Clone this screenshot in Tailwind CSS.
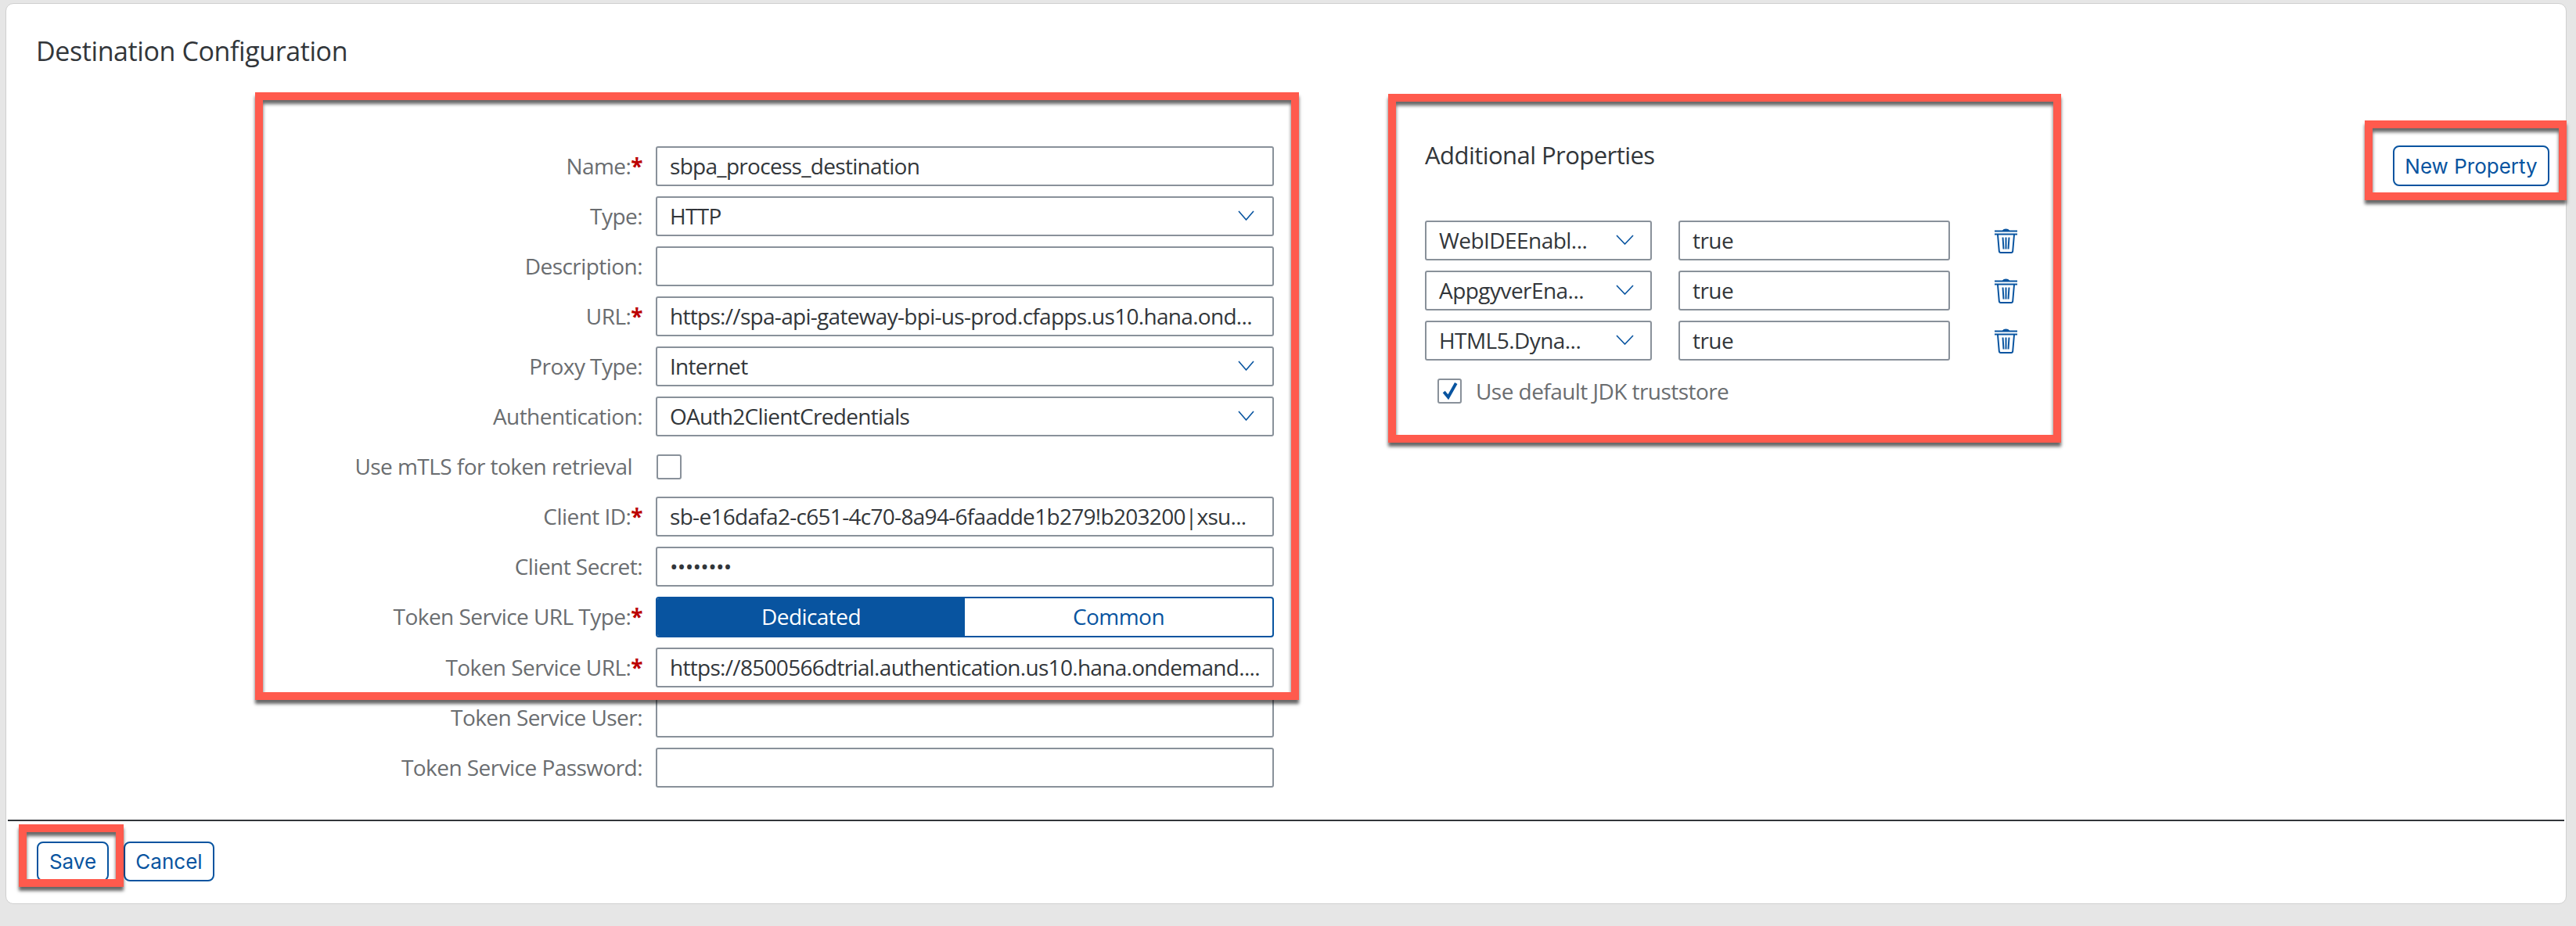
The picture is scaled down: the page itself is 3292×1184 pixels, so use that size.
<!DOCTYPE html>
<html lang="en">
  <head>
    <meta charset="UTF-8" />
    <title>Destination Configuration</title>
    <script src="https://cdn.jsdelivr.net/npm/@tailwindcss/browser@4"></script>
  </head>
  <body class="h-screen overflow-hidden bg-[#e6e6e6] pt-[4px] pl-[7px] pr-[12px] font-['Open_Sans',sans-serif] text-[28px] text-[#32363a]">
    <!-- Card -->
    <div class="relative flex h-[1152px] flex-col rounded-[10px] border border-[#d0d0d0] bg-white">
      <h1 class="h-[105px] pl-[38px] pt-[38px] text-[34px] leading-[44px] font-normal tracking-[-0.4px]">Destination Configuration</h1>

      <main class="flex flex-1 items-start">
        <!-- Form -->
        <form class="ml-[313px] grid w-[1307px] grid-cols-[500px_790px] gap-x-[17px] gap-y-[13px] pt-[77px] tracking-[-0.55px]">
          <label class="flex h-[51px] items-center justify-end pb-[2px] text-[#6a6d70]">Name:<span class="font-bold text-[#bb0000]">*</span></label>
          <input class="h-[51px] rounded-[3px] border-2 border-[#89919a] px-[16px] pb-[2px] tracking-[-0.7px] outline-none" value="sbpa_process_destination" />

          <label class="flex h-[51px] items-center justify-end pb-[2px] text-[#6a6d70]">Type:</label>
          <div class="flex h-[51px] items-center justify-between rounded-[3px] border-2 border-[#89919a] pb-[2px] pl-[16px] pr-[23px] tracking-[-0.7px]">
            HTTP
            <svg class="h-[13px] w-[21px]" viewBox="0 0 21 13" fill="none" stroke="#0854a0" stroke-width="1.6"><path d="M1 1l9.5 11L20 1" /></svg>
          </div>

          <label class="flex h-[51px] items-center justify-end pb-[2px] text-[#6a6d70]">Description:</label>
          <input class="h-[51px] rounded-[3px] border-2 border-[#89919a] px-[16px] pb-[2px] tracking-[-0.7px] outline-none" />

          <label class="flex h-[51px] items-center justify-end pb-[2px] text-[#6a6d70]">URL:<span class="font-bold text-[#bb0000]">*</span></label>
          <input class="h-[51px] rounded-[3px] border-2 border-[#89919a] px-[16px] pb-[2px] tracking-[-0.7px] outline-none" value="https://spa-api-gateway-bpi-us-prod.cfapps.us10.hana.ond..." />

          <label class="flex h-[51px] items-center justify-end pb-[2px] text-[#6a6d70]">Proxy Type:</label>
          <div class="flex h-[51px] items-center justify-between rounded-[3px] border-2 border-[#89919a] pb-[2px] pl-[16px] pr-[23px] tracking-[-0.7px]">
            Internet
            <svg class="h-[13px] w-[21px]" viewBox="0 0 21 13" fill="none" stroke="#0854a0" stroke-width="1.6"><path d="M1 1l9.5 11L20 1" /></svg>
          </div>

          <label class="flex h-[51px] items-center justify-end pb-[2px] text-[#6a6d70]">Authentication:</label>
          <div class="flex h-[51px] items-center justify-between rounded-[3px] border-2 border-[#89919a] pb-[2px] pl-[16px] pr-[23px] tracking-[-0.7px]">
            OAuth2ClientCredentials
            <svg class="h-[13px] w-[21px]" viewBox="0 0 21 13" fill="none" stroke="#0854a0" stroke-width="1.6"><path d="M1 1l9.5 11L20 1" /></svg>
          </div>

          <label class="flex h-[51px] items-center justify-end pb-[2px] pr-[13px] text-[#6a6d70]">Use mTLS for token retrieval</label>
          <div class="flex h-[51px] items-center pl-[1px]">
            <span class="h-[32px] w-[32px] rounded-[3px] border-2 border-[#89919a]"></span>
          </div>

          <label class="flex h-[51px] items-center justify-end pb-[2px] text-[#6a6d70]">Client ID:<span class="font-bold text-[#bb0000]">*</span></label>
          <input class="h-[51px] rounded-[3px] border-2 border-[#89919a] px-[16px] pb-[2px] tracking-[-0.7px] outline-none" value="sb-e16dafa2-c651-4c70-8a94-6faadde1b279!b203200|xsu..." />

          <label class="flex h-[51px] items-center justify-end pb-[2px] text-[#6a6d70]">Client Secret:</label>
          <input class="h-[51px] rounded-[3px] border-2 border-[#89919a] px-[16px] pb-[2px] tracking-[-0.7px] outline-none" value="••••••••" />

          <label class="flex h-[51px] items-center justify-end pb-[2px] text-[#6a6d70]">Token Service URL Type:<span class="font-bold text-[#bb0000]">*</span></label>
          <div class="flex h-[52px] overflow-hidden rounded-[4px] border-2 border-[#0854a0]">
            <button type="button" class="w-[393px] bg-[#0854a0] pb-[2px] text-white">Dedicated</button>
            <button type="button" class="flex-1 pb-[2px] text-[#0854a0]">Common</button>
          </div>

          <label class="flex h-[51px] items-center justify-end pb-[2px] text-[#6a6d70]">Token Service URL:<span class="font-bold text-[#bb0000]">*</span></label>
          <input class="h-[51px] rounded-[3px] border-2 border-[#89919a] px-[16px] pb-[2px] tracking-[-0.7px] outline-none" value="https://8500566dtrial.authentication.us10.hana.ondemand...." />

          <label class="flex h-[51px] items-center justify-end pb-[2px] text-[#6a6d70]">Token Service User:</label>
          <input class="h-[51px] rounded-[3px] border-2 border-[#89919a] px-[16px] pb-[2px] tracking-[-0.7px] outline-none" />

          <label class="flex h-[51px] items-center justify-end pb-[2px] text-[#6a6d70]">Token Service Password:</label>
          <input class="h-[51px] rounded-[3px] border-2 border-[#89919a] px-[16px] pb-[2px] tracking-[-0.7px] outline-none" />
        </form>

        <!-- Additional properties -->
        <section class="ml-[193px] w-[757px] pt-[68px] tracking-[-0.55px]">
          <h2 class="mb-[64px] h-[40px] text-[31px] leading-[40px] font-normal">Additional Properties</h2>
          <div class="flex flex-col gap-[13px]">
            <div class="flex h-[51px] items-center">
              <div class="flex h-[51px] w-[290px] items-center justify-between rounded-[3px] border-2 border-[#89919a] pb-[2px] pl-[16px] pr-[21px]">
                WebIDEEnabl...
                <svg class="h-[13px] w-[23px]" viewBox="0 0 23 13" fill="none" stroke="#0854a0" stroke-width="1.6"><path d="M1 1l10.5 11L22 1" /></svg>
              </div>
              <input class="ml-[34px] h-[51px] w-[347px] rounded-[3px] border-2 border-[#89919a] px-[16px] pb-[2px] outline-none" value="true" />
              <svg class="ml-[57px] h-[32px] w-[29px]" viewBox="0 0 29 32" fill="none" stroke="#0854a0" stroke-width="2">
                <path d="M11 3c1-2 6-2 7 0z" fill="#0854a0" />
                <path d="M0 3.500h29M0 7.500h29" />
                <path d="M4 8l1.800 21c.1 1.200.8 2 2 2h13.400c1.200 0 1.900-.8 2-2L25 8" />
                <path d="M10.500 11.500l1 15M14.500 11.500v15M18.500 11.500l-1 15" />
              </svg>
            </div>
            <div class="flex h-[51px] items-center">
              <div class="flex h-[51px] w-[290px] items-center justify-between rounded-[3px] border-2 border-[#89919a] pb-[2px] pl-[16px] pr-[21px]">
                AppgyverEna...
                <svg class="h-[13px] w-[23px]" viewBox="0 0 23 13" fill="none" stroke="#0854a0" stroke-width="1.6"><path d="M1 1l10.5 11L22 1" /></svg>
              </div>
              <input class="ml-[34px] h-[51px] w-[347px] rounded-[3px] border-2 border-[#89919a] px-[16px] pb-[2px] outline-none" value="true" />
              <svg class="ml-[57px] h-[32px] w-[29px]" viewBox="0 0 29 32" fill="none" stroke="#0854a0" stroke-width="2">
                <path d="M11 3c1-2 6-2 7 0z" fill="#0854a0" />
                <path d="M0 3.500h29M0 7.500h29" />
                <path d="M4 8l1.800 21c.1 1.200.8 2 2 2h13.400c1.200 0 1.900-.8 2-2L25 8" />
                <path d="M10.500 11.500l1 15M14.500 11.500v15M18.500 11.500l-1 15" />
              </svg>
            </div>
            <div class="flex h-[51px] items-center">
              <div class="flex h-[51px] w-[290px] items-center justify-between rounded-[3px] border-2 border-[#89919a] pb-[2px] pl-[16px] pr-[21px]">
                HTML5.Dyna...
                <svg class="h-[13px] w-[23px]" viewBox="0 0 23 13" fill="none" stroke="#0854a0" stroke-width="1.6"><path d="M1 1l10.5 11L22 1" /></svg>
              </div>
              <input class="ml-[34px] h-[51px] w-[347px] rounded-[3px] border-2 border-[#89919a] px-[16px] pb-[2px] outline-none" value="true" />
              <svg class="ml-[57px] h-[32px] w-[29px]" viewBox="0 0 29 32" fill="none" stroke="#0854a0" stroke-width="2">
                <path d="M11 3c1-2 6-2 7 0z" fill="#0854a0" />
                <path d="M0 3.500h29M0 7.500h29" />
                <path d="M4 8l1.800 21c.1 1.200.8 2 2 2h13.400c1.200 0 1.900-.8 2-2L25 8" />
                <path d="M10.500 11.500l1 15M14.500 11.500v15M18.500 11.500l-1 15" />
              </svg>
            </div>
          </div>
          <div class="ml-[16px] mt-[23px] flex h-[32px] items-center gap-[18px] text-[#6a6d70]">
            <span class="flex h-[32px] w-[31px] items-center justify-center rounded-[3px] border-2 border-[#89919a]">
              <svg class="h-[24px] w-[20px]" viewBox="0 0 18 20" fill="none" stroke="#0854a0" stroke-width="3.500"><path d="M2 11l5 6L16 1" /></svg>
            </span>
            Use default JDK truststore
          </div>
        </section>

        <button type="button" class="ml-auto mr-[21px] mt-[76px] h-[52px] w-[200px] rounded-[8px] border-2 border-[#0854a0] font-['Inter',sans-serif] text-[26px] text-[#0854a0]">New Property</button>
      </main>

      <!-- Footer -->
      <footer class="mx-[2px] mb-[28px] flex h-[79px] items-end gap-[19px] border-t-2 border-[#32363a] pl-[37px]">
        <button type="button" class="h-[51px] w-[92px] rounded-[8px] border-2 border-[#0854a0] font-['Inter',sans-serif] text-[26px] text-[#0854a0]">Save</button>
        <button type="button" class="h-[51px] w-[116px] rounded-[8px] border-2 border-[#0854a0] font-['Inter',sans-serif] text-[26px] text-[#0854a0]">Cancel</button>
      </footer>

      <!-- Red annotation boxes, drawn over the screenshot -->
      <div class="pointer-events-none absolute left-[318px] top-[113px] h-[777px] w-[1334px] border-[10px] border-[#ff5a4d] shadow-[0_5px_4px_rgba(0,0,0,0.6),inset_0_5px_4px_rgba(0,0,0,0.6)]"></div>
      <div class="pointer-events-none absolute left-[1766px] top-[115px] h-[446px] w-[860px] border-[10px] border-[#ff5a4d] shadow-[0_5px_4px_rgba(0,0,0,0.6),inset_0_5px_4px_rgba(0,0,0,0.6)]"></div>
      <div class="pointer-events-none absolute left-[3014px] top-[149px] h-[102px] w-[258px] border-[10px] border-[#ff5a4d] shadow-[0_5px_4px_rgba(0,0,0,0.6),inset_0_5px_4px_rgba(0,0,0,0.6)]"></div>
      <div class="pointer-events-none absolute left-[16px] top-[1049px] h-[80px] w-[134px] border-[10px] border-[#ff5a4d] shadow-[0_5px_4px_rgba(0,0,0,0.6),inset_0_5px_4px_rgba(0,0,0,0.6)]"></div>
    </div>
  </body>
</html>
